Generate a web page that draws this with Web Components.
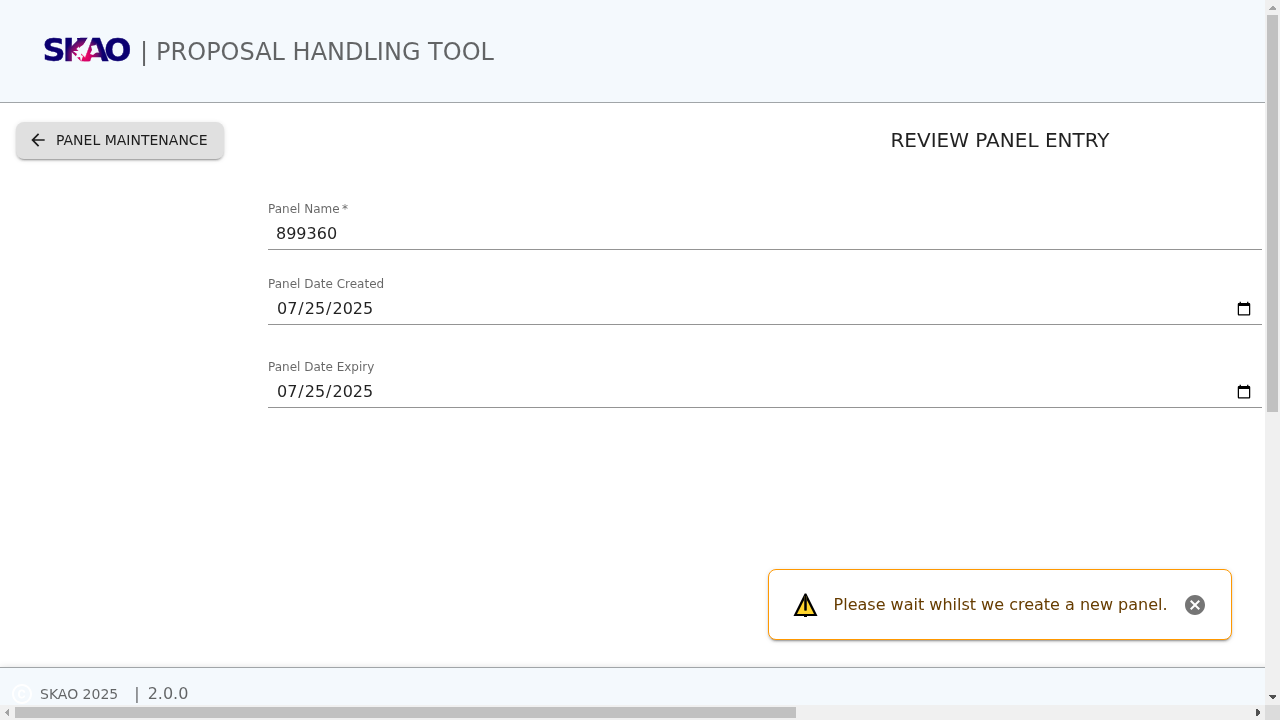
<!DOCTYPE html>
<html lang="en">
<head>
<meta charset="utf-8">
<title>Proposal Handling Tool</title>
<style>
html,body{margin:0;height:100%;overflow:hidden;background:#fff}
body{font-family:"DejaVu Sans",sans-serif;color:rgba(0,0,0,.87)}
</style>
</head>
<body>
<pht-window>
  <pht-header slot="header">PROPOSAL HANDLING TOOL</pht-header>
  <pht-toolbar>
    <pht-button slot="action">PANEL MAINTENANCE</pht-button>
    REVIEW PANEL ENTRY
  </pht-toolbar>
  <pht-form>
    <pht-field label="Panel Name" required>899360</pht-field>
    <pht-field label="Panel Date Created" date>07/25/2025</pht-field>
    <pht-field label="Panel Date Expiry" date class="last">07/25/2025</pht-field>
  </pht-form>
  <pht-alert slot="overlay">Please wait whilst we create a new panel.</pht-alert>
  <pht-footer slot="footer"><span slot="owner">SKAO 2025</span>2.0.0</pht-footer>
</pht-window>
<script>
function define(name, template) {
  customElements.define(name, class extends HTMLElement {
    constructor() {
      super();
      this.attachShadow({mode: 'open'});
    }
    connectedCallback() {
      this.shadowRoot.innerHTML = typeof template === 'function' ? template(this) : template;
    }
  });
}

define('pht-window', `<style>
:host{display:grid;grid-template:minmax(0,1fr) 15px / minmax(0,1fr) 15px;width:100vw;height:100vh;position:relative}
.view{overflow:hidden;min-width:0}
.page{display:flex;flex-direction:column;width:2000px;height:100%;will-change:transform}
main{flex:1;min-height:0}
.corner{background:#dcdcdc}
.overlay{position:absolute;left:768px;top:569px;will-change:transform}
</style>
<div class="view"><div class="page"><slot name="header"></slot><main><slot></slot></main><slot name="footer"></slot></div></div>
<pht-scrollbar vertical></pht-scrollbar><pht-scrollbar></pht-scrollbar><div class="corner"></div>
<div class="overlay"><slot name="overlay"></slot></div>`);

define('pht-scrollbar', el => {
  const v = el.hasAttribute('vertical');
  return `<style>
:host{display:flex;flex-direction:${v ? 'column' : 'row'};background:#f0f0f0}
svg{flex:none;display:block;width:15px;height:15px}
.track{flex:1;display:flex;flex-direction:inherit;padding:${v ? '0 2px' : '2px 0'}}
.thumb{background:#c1c1c1;flex:none;${v ? 'height:397px;width:11px' : 'width:781px;height:11px'}}
</style>
<svg viewBox="0 0 15 15" shape-rendering="crispEdges"><path fill="#a3a3a3" d="${v ? 'M4 10h7v-1L8 6H7L4 9z' : 'M9 4v7H8L5 8V7l3-3z'}"/></svg>
<div class="track"><div class="thumb"></div></div>
<svg viewBox="0 0 15 15" shape-rendering="crispEdges"><path fill="#505050" d="${v ? 'M4 5h7v1L8 9H7L4 6z' : 'M6 4v7h1l3-3V7L7 4z'}"/></svg>`;
});

define('pht-header', `<style>
:host{display:flex;align-items:center;box-sizing:border-box;height:103px;flex:none;padding-left:40px;background:#f4f9fd;border-bottom:1px solid #a1a5a8;color:rgba(0,0,0,.6);font-size:24px;line-height:32px}
pht-logo{margin-right:5px}.bar{margin-right:8px}
.bar,.title{padding-top:2px}
</style><pht-logo></pht-logo><span class="bar">|</span><span class="title"><slot></slot></span>`);

define('pht-logo', `<style>
:host{display:block;width:95px;height:46px}
svg{display:block}
text{font:bold 32px "DejaVu Sans",sans-serif}
</style>
<svg width="95" height="46" viewBox="-4 -10 95 46">
<defs><radialGradient id="g" gradientUnits="userSpaceOnUse" cx="40" cy="18" r="20"><stop offset="0" stop-color="#f20c62"/><stop offset=".35" stop-color="#d00069"/><stop offset=".68" stop-color="#70106c"/><stop offset=".95" stop-color="#0b0070"/></radialGradient></defs>
<text fill="url(#g)" stroke="url(#g)" stroke-width=".4" y="23.2" x="-1.4 18.8 39.7 60.2">SKAO</text>
<path fill="url(#g)" d="M33 0h10l-3 7-5 3z"/>
<path fill="#f4f9fd" d="M44 0l-2 8 0 3-4 2-1 4 2 1-2 6-1-5-5 1 2-4-4-3 6 0 1-4 3-2z"/>
<path fill="#f4f9fd" d="M47 8l5-1 2 6-5 4-3-1 2-4z"/>
</svg>`);

define('pht-toolbar', `<style>
:host{display:grid;grid-template-columns:1fr auto 1fr;align-items:center;padding:19px 16px 0;height:37px;font-size:20px;line-height:32px}
slot[name=action]{display:flex}
.title{padding-bottom:2px}
</style><slot name="action"></slot><span class="title"><slot></slot></span>`);

define('pht-button', `<style>
:host{display:block}
button{display:flex;align-items:center;box-sizing:border-box;height:37px;width:208px;padding:0 16px 1px 12px;border:0;border-radius:8px;background:#e0e0e0;color:rgba(0,0,0,.87);font:14px/24px "DejaVu Sans",sans-serif;white-space:nowrap;box-shadow:0 3px 1px -2px rgba(0,0,0,.2),0 2px 2px 0 rgba(0,0,0,.14),0 1px 5px 0 rgba(0,0,0,.12)}
svg{width:20px;height:20px;margin-right:8px;flex:none}
</style><button><svg viewBox="0 0 24 24"><path fill="currentColor" d="M20 11H7.83l5.59-5.59L12 4l-8 8 8 8 1.41-1.41L7.83 13H20z"/></svg><span><slot></slot></span></button>`);

define('pht-form', `<style>
:host{display:flex;flex-direction:column;gap:27px;width:994px;margin:43px 0 0 268px}
::slotted(.last){margin-top:8px}
</style><slot></slot>`);

define('pht-field', el => {
  const date = el.hasAttribute('date');
  return `<style>
:host{display:block}
label{display:block;font-size:12px;line-height:14px;height:16px;color:rgba(0,0,0,.6)}
.input{display:flex;align-items:center;justify-content:space-between;box-sizing:border-box;height:32px;padding:${date ? '0 10px 1px 9px' : '0 8px 1px'};border-bottom:1px solid #949494;font-size:16px;line-height:23px}
svg{width:16px;height:15px;margin-top:1px}
i{font-style:normal;margin-left:2.5px}
.sep{margin:0 1px}
</style><label>${el.getAttribute('label')}${el.hasAttribute('required') ? '<i>*</i>' : ''}</label>
<div class="input"><span>${date ? el.textContent.split('/').join('<span class="sep">/</span>') : '<slot></slot>'}</span>${date ? '<svg viewBox="0 0 24 24"><path fill="#000" d="M20 3h-1V1h-2v2H7V1H5v2H4c-1.1 0-2 .9-2 2v16c0 1.1.9 2 2 2h16c1.1 0 2-.9 2-2V5c0-1.1-.9-2-2-2zm0 18H4V8h16v13z"/></svg>' : ''}</div>`;
});

define('pht-alert', `<style>
:host{display:flex;align-items:center;box-sizing:border-box;width:464px;height:71px;padding-left:24px;border:1px solid #ff9800;border-radius:8px;background:#fff;color:#663c00;font-size:16px;line-height:24px;white-space:nowrap;box-shadow:0 3px 1px -2px rgba(0,0,0,.2),0 2px 2px 0 rgba(0,0,0,.14),0 1px 5px 0 rgba(0,0,0,.12)}
svg{flex:none}.warn{margin:2px 15.6px 0 0}.close{margin-left:15.4px}
</style>
<svg class="warn" width="25" height="25" viewBox="0 0 25 25"><path fill="#000" d="M11.7.4h1.6L24.5 23H14v1h-3v-1H.5z"/><path fill="#ffd52e" d="M12.5 4.2L21 21H4z"/><path fill="#4b4117" d="M11 3h3v14.5h-3z"/><path stroke="#000" stroke-width="1.4" d="M12.5 2v15.5"/></svg>
<span><slot></slot></span>
<svg class="close" width="24" height="24" viewBox="0 0 24 24"><path fill="#757575" d="M12 2C6.47 2 2 6.47 2 12s4.47 10 10 10 10-4.47 10-10S17.53 2 12 2zm5 13.59L15.59 17 12 13.41 8.41 17 7 15.59 10.59 12 7 8.41 8.41 7 12 10.59 15.59 7 17 8.41 13.41 12z"/></svg>`);

define('pht-footer', `<style>
:host{display:flex;align-items:center;box-sizing:border-box;height:38px;flex:none;padding:14px 0 0 10px;background:#f4f9fd;border-top:1px solid #a1a5a8;color:rgba(0,0,0,.6);font-size:16px;line-height:24px;box-shadow:0 2px 8px rgba(0,0,0,.2)}
svg{width:24px;height:24px;margin-right:6px;flex:none}
.owner{font-size:14px}.bar{margin:0 8px 0 16px}
</style>
<svg viewBox="0 0 24 24"><path fill="#fff" d="M11.88 9.14c1.28.06 1.61 1.15 1.63 1.66h1.79c-.08-1.98-1.49-3.19-3.45-3.19C9.64 7.61 8 9 8 12.14c0 1.94.93 4.24 3.84 4.24 2.22 0 3.41-1.65 3.44-2.95h-1.79c-.03.59-.45 1.38-1.63 1.44-1.31-.04-1.86-1.06-1.86-2.73 0-2.89 1.28-2.98 1.88-3zM12 2C6.48 2 2 6.48 2 12s4.48 10 10 10 10-4.48 10-10S17.52 2 12 2zm0 18c-4.41 0-8-3.59-8-8s3.59-8 8-8 8 3.59 8 8-3.59 8-8 8z"/></svg>
<span class="owner"><slot name="owner"></slot></span><span class="bar">|</span><span><slot></slot></span>`);
</script>
</body>
</html>
